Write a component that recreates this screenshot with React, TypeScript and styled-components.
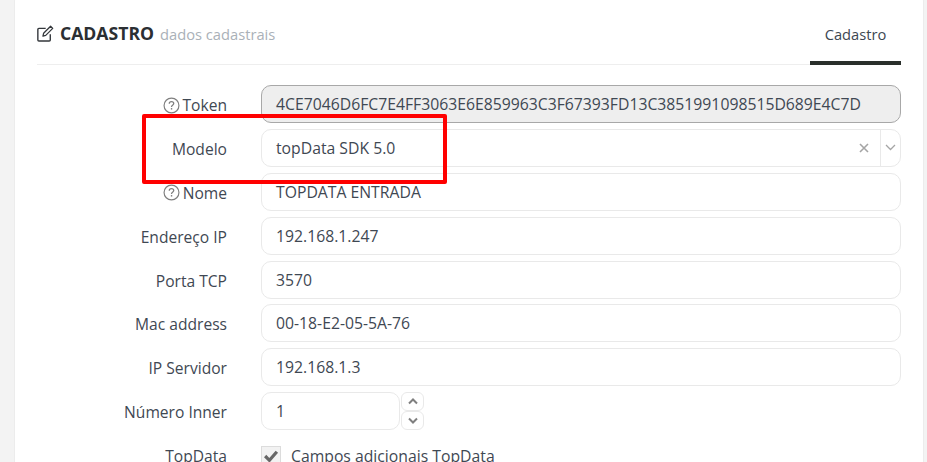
import React from "react";
import styled, { createGlobalStyle } from "styled-components";

const Global = createGlobalStyle`
  html, body { margin: 0; padding: 0; height: 100%; overflow: hidden; background: #f3f3f3; }
  body { font-family: "Open Sans", "Liberation Sans", sans-serif; }
`;

const Page = styled.div`
  position: relative;
  width: 927px;
  height: 462px;
  overflow: hidden;
  padding-left: 14px;
  box-sizing: border-box;
`;

const Card = styled.div`
  width: 910px;
  height: 520px;
  margin-top: -11px;
  background: #fff;
  border-radius: 12px;
  border: 1px solid #ececec;
  box-sizing: border-box;
  padding: 10px 22px 0 22px;
`;

const Header = styled.div`
  display: flex;
  align-items: flex-end;
  justify-content: space-between;
  border-bottom: 1px solid #eeeeee;
  box-sizing: border-box;
  height: 65px;
`;

const TitleWrap = styled.div`
  display: flex;
  align-items: center;
  height: 64px;
  padding-top: 2px;
  box-sizing: border-box;
`;

const Title = styled.span`
  font-size: 17.6px;
  font-weight: 700;
  color: #2b2f33;
  margin-left: 6px;
`;

const Subtitle = styled.span`
  font-size: 14.7px;
  color: #aab1b8;
  margin-left: 6px;
  position: relative;
  top: 1px;
`;

const Tab = styled.div`
  width: 91px;
  height: 65px;
  box-sizing: border-box;
  border-bottom: 4px solid #2a2f2b;
  text-align: center;
  font-size: 14.7px;
  color: #3d4752;
  padding-top: 24px;
  line-height: 20px;
  margin-bottom: -1px;
`;

const Form = styled.div`
  display: flex;
  flex-direction: column;
  padding-top: 20px;
`;

const Row = styled.div`
  display: grid;
  grid-template-columns: 190px 1fr;
  column-gap: 34px;
  height: 38px;
  margin-bottom: 5.88px;
`;

const Label = styled.div`
  display: flex;
  align-items: center;
  justify-content: flex-end;
  gap: 3px;
  font-size: 15.6px;
  color: #3f4853;
  padding-top: 2px;
`;

const Field = styled.div<{ $disabled?: boolean }>`
  height: 38px;
  box-sizing: border-box;
  border-radius: 10px;
  border: 1px solid ${(p) => (p.$disabled ? "#a8a8a8" : "#e9e9e9")};
  background: ${(p) => (p.$disabled ? "#eeeeee" : "#fff")};
  display: flex;
  align-items: center;
  padding-left: 14px;
  font-size: 15.75px;
  color: #3f4853;
`;

const SelectField = styled(Field)`
  justify-content: space-between;
  padding-right: 0;
`;

const SelectValue = styled.span`
  flex: 1;
`;

const SelectTools = styled.div`
  display: flex;
  align-items: center;
  height: 36px;
`;

const Clear = styled.span`
  width: 32px;
  display: flex;
  justify-content: center;
`;

const Chevron = styled.span`
  width: 19px;
  height: 36px;
  display: flex;
  align-items: center;
  justify-content: center;
  border-left: 1px solid #e9e9e9;
`;

const SpinWrap = styled.div`
  display: flex;
  align-items: center;
  gap: 1px;
`;

const ShortField = styled(Field)`
  width: 139px;
`;

const Spin = styled.div`
  display: flex;
  flex-direction: column;
  width: 23px;
`;

const SpinButton = styled.div`
  height: 19px;
  box-sizing: border-box;
  border: 1px solid #e9e9e9;
  border-radius: 6px;
  display: flex;
  align-items: center;
  justify-content: center;
`;

const CheckRow = styled.div`
  display: flex;
  align-items: center;
  height: 38px;
  font-size: 15.75px;
  color: #3f4853;
  gap: 10px;
  padding-top: 1px;
  box-sizing: border-box;
`;

const CheckBox = styled.span`
  width: 20px;
  height: 20px;
  box-sizing: border-box;
  border: 1px solid #dcdcdc;
  background: #f2f2f2;
  display: flex;
  align-items: center;
  justify-content: center;
`;

const Highlight = styled.div`
  position: absolute;
  left: 142px;
  top: 114px;
  width: 305px;
  height: 70px;
  box-sizing: border-box;
  border: 4px solid #ff0000;
  border-radius: 2px;
  pointer-events: none;
`;

const Help = () => (
  <svg width="17" height="17" viewBox="0 0 16 16" fill="none">
    <circle cx="8" cy="8" r="7" stroke="#7f7f7f" strokeWidth="1.1" />
    <path d="M5.9 6.3c0-1.2 1-1.9 2.1-1.9s2.1.7 2.1 1.8c0 1.5-2.1 1.6-2.1 3.1" stroke="#7f7f7f" strokeWidth="1.2" />
    <rect x="7.4" y="10.4" width="1.3" height="1.4" fill="#7f7f7f" />
  </svg>
);

const EditIcon = () => (
  <svg width="17" height="17" viewBox="0 0 16 16" fill="none">
    <path d="M12.5 8.8v5.2a1 1 0 0 1-1 1H1.8a1 1 0 0 1-1-1V4.2a1 1 0 0 1 1-1h6.4" stroke="#33373b" strokeWidth="1.3" />
    <path d="M6.2 7.8 12.8 1.2l2 2-6.6 6.6-2.6.6z" stroke="#33373b" strokeWidth="1.2" strokeLinejoin="round" />
  </svg>
);

const rows = [
  { label: "Endereço IP", value: "192.168.1.247" },
  { label: "Porta TCP", value: "3570" },
  { label: "Mac address", value: "00-18-E2-05-5A-76" },
  { label: "IP Servidor", value: "192.168.1.3" },
];

export default function App() {
  return (
    <Page>
      <Global />
      <Card>
        <Header>
          <TitleWrap>
            <EditIcon />
            <Title>CADASTRO</Title>
            <Subtitle>dados cadastrais</Subtitle>
          </TitleWrap>
          <Tab>Cadastro</Tab>
        </Header>
        <Form>
          <Row>
            <Label><Help />Token</Label>
            <Field $disabled>4CE7046D6FC7E4FF3063E6E859963C3F67393FD13C3851991098515D689E4C7D</Field>
          </Row>
          <Row>
            <Label>Modelo</Label>
            <SelectField>
              <SelectValue>topData SDK 5.0</SelectValue>
              <SelectTools>
                <Clear>
                  <svg width="10" height="10" viewBox="0 0 10 10"><path d="M1 1l8 8M9 1l-8 8" stroke="#a5a5a5" strokeWidth="1.6" /></svg>
                </Clear>
                <Chevron>
                  <svg width="11" height="7" viewBox="0 0 11 7" fill="none"><path d="M1 1l4.5 4.5L10 1" stroke="#a5a5a5" strokeWidth="1.3" /></svg>
                </Chevron>
              </SelectTools>
            </SelectField>
          </Row>
          <Row>
            <Label><Help />Nome</Label>
            <Field>TOPDATA ENTRADA</Field>
          </Row>
          {rows.map((r) => (
            <Row key={r.label}>
              <Label>{r.label}</Label>
              <Field>{r.value}</Field>
            </Row>
          ))}
          <Row>
            <Label>Número Inner</Label>
            <SpinWrap>
              <ShortField>1</ShortField>
              <Spin>
                <SpinButton>
                  <svg width="10" height="7" viewBox="0 0 10 7" fill="none"><path d="M1 5.5l4-4 4 4" stroke="#7f7f7f" strokeWidth="2" /></svg>
                </SpinButton>
                <SpinButton>
                  <svg width="10" height="7" viewBox="0 0 10 7" fill="none"><path d="M1 1.5l4 4 4-4" stroke="#7f7f7f" strokeWidth="2" /></svg>
                </SpinButton>
              </Spin>
            </SpinWrap>
          </Row>
          <Row>
            <Label>TopData</Label>
            <CheckRow>
              <CheckBox>
                <svg width="16" height="14" viewBox="0 0 15 13" fill="none"><path d="M2 6.5l4 4L13 2.5" stroke="#666" strokeWidth="3" /></svg>
              </CheckBox>
              Campos adicionais TopData
            </CheckRow>
          </Row>
        </Form>
      </Card>
      <Highlight />
    </Page>
  );
}
